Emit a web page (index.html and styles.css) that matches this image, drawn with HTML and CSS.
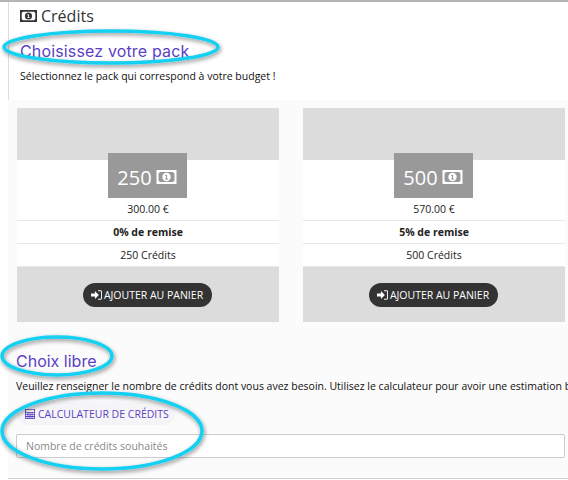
FILE: index.html
```html
<!DOCTYPE html>
<html lang="en">
  <head>
    <meta charset="UTF-8" />
    <meta name="viewport" content="width=device-width, initial-scale=1.0" />
    <title>Crédits</title>
    <link rel="stylesheet" href="styles.css">
  </head>
  <body>
    <svg class="icon-defs" width="0" height="0">
      <symbol id="money" viewBox="0 0 20 14">
        <path fill-rule="evenodd" d="M0 0h20v14H0zM3.5 2 2 3.5v7L3.500 12h13l1.500-1.500v-7L16.500 2z"/>
        <path fill-rule="evenodd" d="M10 2.800a4.200 4.200 0 1 0 0 8.400 4.200 4.200 0 0 0 0-8.400zM9.300 4.800h1.200v3.600h1v1H8.500v-1h1V6l-.8.300V5.300z"/>
      </symbol>
    </svg>
    <div class="panel">
      <div class="intro">
        <h1 class="page-title">
          <svg class="title-icon"><use href="#money" /></svg>
          Crédits
        </h1>
        <h2 class="section-title">Choisissez votre pack</h2>
        <p class="section-text">Sélectionnez le pack qui correspond à votre budget !</p>
      </div>

      <div class="lower">
        <div class="packs">
          <div class="pack">
            <div class="pack-top"></div>
            <div class="pack-amount">
              250
              <svg class="amount-icon"><use href="#money" /></svg>
            </div>
            <div class="pack-row">300.00 €</div>
            <div class="pack-row pack-row-bold">0% de remise</div>
            <div class="pack-row">250 Crédits</div>
            <div class="pack-bottom">
              <button class="cart-btn">
                <svg class="cart-icon" viewBox="0 0 14 12">
                  <path d="M0 4h5V1l5 5-5 5V8H0z" fill="#fff" />
                  <path d="M9 .7h3a1.500 1.500 0 0 1 1.500 1.500v7.600A1.500 1.500 0 0 1 12 11.300H9" fill="none" stroke="#fff" stroke-width="1.300" />
                </svg>
                AJOUTER AU PANIER
              </button>
            </div>
          </div>
          <div class="pack">
            <div class="pack-top"></div>
            <div class="pack-amount">
              500
              <svg class="amount-icon"><use href="#money" /></svg>
            </div>
            <div class="pack-row">570.00 €</div>
            <div class="pack-row pack-row-bold">5% de remise</div>
            <div class="pack-row">500 Crédits</div>
            <div class="pack-bottom">
              <button class="cart-btn">
                <svg class="cart-icon" viewBox="0 0 14 12">
                  <path d="M0 4h5V1l5 5-5 5V8H0z" fill="#fff" />
                  <path d="M9 .7h3a1.500 1.500 0 0 1 1.500 1.500v7.600A1.500 1.500 0 0 1 12 11.300H9" fill="none" stroke="#fff" stroke-width="1.300" />
                </svg>
                AJOUTER AU PANIER
              </button>
            </div>
          </div>
        </div>

        <h2 class="section-title free-title">Choix libre</h2>
        <p class="section-text free-text">Veuillez renseigner le nombre de crédits dont vous avez besoin. Utilisez le calculateur pour avoir une estimation budgétaire.</p>
        <button class="calc-btn">
          <svg class="calc-icon" viewBox="0 0 12 12">
            <path fill-rule="evenodd" d="M0 0h12v12H0zM1 1v2.500h10V1zM1 4.500V6h2V4.500zm3 0V6h1.500V4.500zm2.500 0V6H8V4.500zm2.500 0V6h2V4.500zM1 7v1.500h2V7zm3 0v1.500h1.500V7zm2.500 0v1.500H8V7zM9 7v1.500h2V7zM1 9.500V11h2V9.500zm3 0V11h1.500V9.500zm2.500 0V11H8V9.500zm2.500 0V11h2V9.500z"/>
          </svg>
          CALCULATEUR DE CRÉDITS
        </button>
        <input class="credit-input" type="text" placeholder="Nombre de crédits souhaités" />
      </div>
    </div>

    <!-- highlight marks drawn over the screenshot -->
    <svg class="marks" width="568" height="480">
      <defs>
        <filter id="mark-shadow" x="-10%" y="-30%" width="120%" height="160%">
          <feDropShadow dx="1" dy="2" stdDeviation="2" flood-color="#000" flood-opacity="0.45" />
        </filter>
      </defs>
      <g filter="url(#mark-shadow)" fill="none" stroke="#13d0f2" stroke-width="3.500">
        <ellipse cx="111" cy="47" rx="107" ry="16" />
        <ellipse cx="57" cy="356" rx="55" ry="19" />
        <ellipse cx="102" cy="431" rx="100" ry="38" />
      </g>
    </svg>
  </body>
</html>
```

FILE: styles.css
```css
body {
  font-family: "Open Sans", sans-serif;
  background-color: #fff;
  color: #222;
  margin: 0;
  width: 568px;
  height: 480px;
  overflow: hidden;
  position: relative;
  border-top: 2px solid #b5b5b5;
  box-sizing: border-box;
}
.icon-defs {
  position: absolute;
}
.panel {
  margin-left: 8px;
  height: 477px;
  border-bottom: 1px solid #ccc;
  box-sizing: border-box;
}
.intro {
  border-left: 1px solid #ddd;
  padding: 3px 0 0 11px;
  height: 98px;
  box-sizing: border-box;
}
.page-title {
  display: flex;
  align-items: center;
  gap: 4px;
  margin: 0;
  font-size: 16px;
  font-weight: 400;
  line-height: 22px;
  color: #333;
}
.title-icon {
  width: 17px;
  height: 12px;
  fill: #333;
}
.section-title {
  margin: 0;
  font-family: Inter, sans-serif;
  font-size: 16px;
  font-weight: 400;
  color: #5b3fc4;
}
.intro .section-title {
  margin-top: 13px;
  line-height: 22px;
  letter-spacing: 0.15px;
}
.section-text {
  margin: 0;
  font-size: 10.5px;
  line-height: 14px;
  color: #111;
  white-space: nowrap;
}
.intro .section-text {
  margin-top: 7px;
}
.lower {
  background-color: #fbfbfb;
  height: 377px;
  padding-top: 8px;
  box-sizing: border-box;
}
.packs {
  display: flex;
  gap: 24px;
  padding-left: 9px;
}
.pack {
  width: 262px;
  background-color: #fff;
  display: flex;
  flex-direction: column;
  align-items: stretch;
  text-align: center;
}
.pack-top {
  height: 52px;
  background-color: #dcdcdc;
}
.pack-amount {
  align-self: center;
  display: flex;
  align-items: center;
  justify-content: center;
  gap: 4px;
  width: 79px;
  height: 45px;
  margin: -7px 1px 0 0;
  padding: 3px 1px 0 0;
  box-sizing: border-box;
  background-color: #999;
  color: #fff;
  font-size: 20px;
}
.amount-icon {
  width: 21px;
  height: 14px;
  fill: #fff;
}
.pack-row {
  height: 23px;
  line-height: 22px;
  font-size: 10.5px;
  border-bottom: 1px solid #e8e8e8;
  box-sizing: border-box;
}
.pack-row:last-of-type {
  border-bottom: none;
}
.pack-row-bold {
  font-weight: 700;
}
.pack-bottom {
  height: 55px;
  padding-top: 16px;
  box-sizing: border-box;
  background-color: #dcdcdc;
}
.cart-btn {
  display: inline-flex;
  align-items: center;
  justify-content: center;
  gap: 2px;
  width: 129px;
  height: 24px;
  margin-right: 2px;
  padding: 0;
  background-color: #333;
  border: none;
  border-radius: 12px;
  color: #fff;
  font-family: "Open Sans", sans-serif;
  font-size: 10.5px;
  font-weight: 500;
}
.cart-icon {
  width: 11px;
  height: 10px;
}
.free-title {
  margin: 28px 0 0 8px;
  font-size: 16px;
  line-height: 22px;
}
.free-text {
  margin: 7px 0 0 8px;
  overflow: hidden;
}
.calc-btn {
  display: flex;
  align-items: center;
  gap: 3px;
  width: 158px;
  height: 23px;
  margin: 9px 0 0 9px;
  padding: 0 0 0 8px;
  background-color: #f5f5f7;
  border: none;
  border-radius: 11px;
  color: #5b3fc4;
  font-family: "Open Sans", sans-serif;
  font-size: 10.5px;
  box-sizing: border-box;
}
.calc-icon {
  width: 10px;
  height: 10px;
  fill: #5b3fc4;
}
.credit-input {
  display: block;
  width: 549px;
  height: 24px;
  margin: 9px 0 0 8px;
  padding: 0 9px;
  border: 1px solid #ccc;
  border-radius: 2px;
  background-color: #fff;
  font-family: "Open Sans", sans-serif;
  font-size: 10.5px;
  box-sizing: border-box;
}
.credit-input::placeholder {
  color: #888;
}
.marks {
  position: absolute;
  left: 0;
  top: -2px;
  pointer-events: none;
}
```
